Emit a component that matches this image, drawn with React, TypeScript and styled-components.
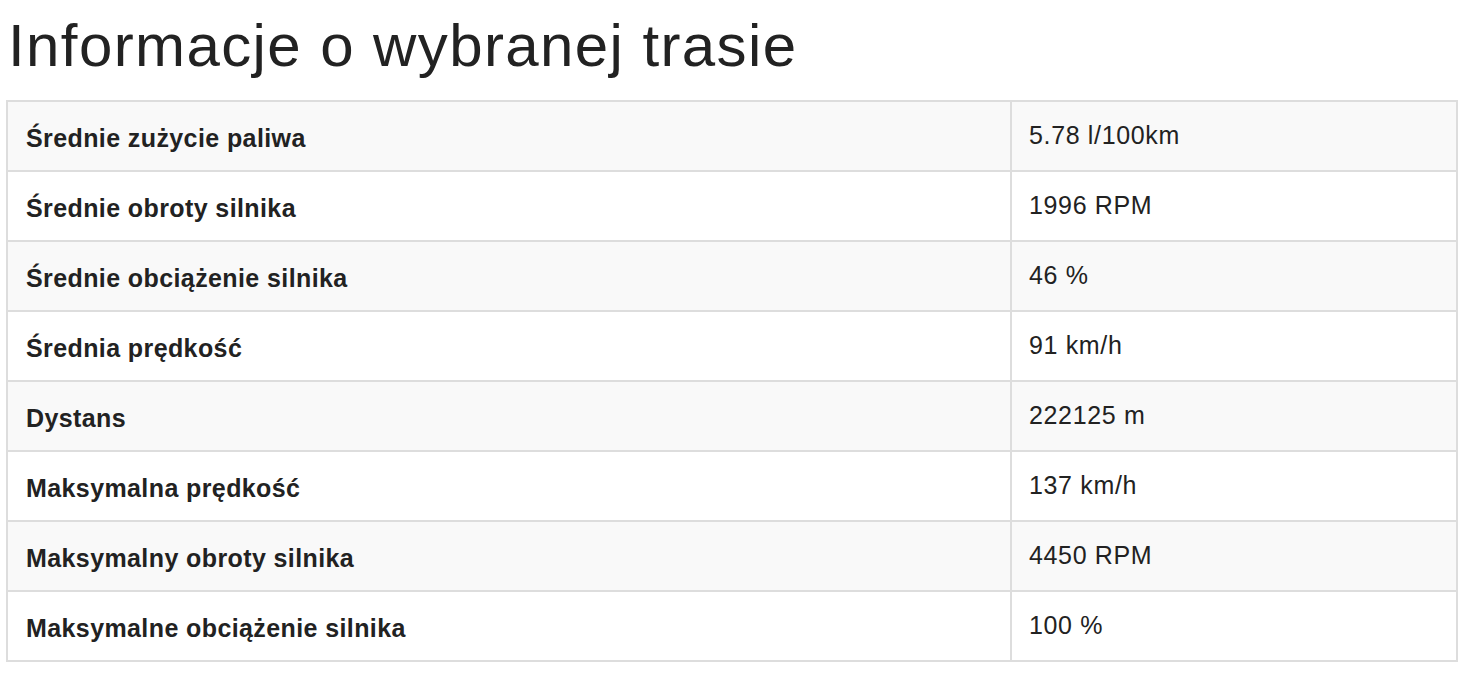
import React from "react";
import styled, { createGlobalStyle } from "styled-components";

const GlobalStyle = createGlobalStyle`
  html, body {
    margin: 0;
    padding: 0;
    background: #ffffff;
  }
  body {
    font-family: "Liberation Sans", Arial, Helvetica, sans-serif;
    color: #222222;
  }
`;

const Page = styled.div`
  padding: 0 6px;
`;

const Heading = styled.h1`
  margin: 0 0 24px 0;
  padding: 16px 0 0 2px;
  font-size: 60px;
  font-weight: 400;
  line-height: 60px;
  color: #222222;
  letter-spacing: 1.4px;
`;

const Table = styled.table`
  width: 1452px;
  border-collapse: collapse;
  border: 2px solid #dddddd;
  table-layout: fixed;
`;

const Row = styled.tr<{ $striped: boolean }>`
  background: ${(p) => (p.$striped ? "#f9f9f9" : "#ffffff")};
`;

const LabelCell = styled.th`
  width: 1004px;
  height: 70px;
  box-sizing: border-box;
  padding: 4px 18px 0 18px;
  border: 2px solid #dddddd;
  text-align: left;
  vertical-align: middle;
  font-size: 25px;
  font-weight: 700;
  letter-spacing: 0.4px;
  color: #222222;
`;

const ValueCell = styled.td`
  height: 70px;
  box-sizing: border-box;
  padding: 0 18px 2px 17px;
  border: 2px solid #dddddd;
  vertical-align: middle;
  font-size: 25px;
  font-weight: 400;
  letter-spacing: 0.65px;
  color: #222222;
`;

const rows: [string, string][] = [
  ["Średnie zużycie paliwa", "5.78 l/100km"],
  ["Średnie obroty silnika", "1996 RPM"],
  ["Średnie obciążenie silnika", "46 %"],
  ["Średnia prędkość", "91 km/h"],
  ["Dystans", "222125 m"],
  ["Maksymalna prędkość", "137 km/h"],
  ["Maksymalny obroty silnika", "4450 RPM"],
  ["Maksymalne obciążenie silnika", "100 %"],
];

export default function App() {
  return (
    <>
      <GlobalStyle />
      <Page>
        <Heading>Informacje o wybranej trasie</Heading>
        <Table>
          <tbody>
            {rows.map(([label, value], i) => (
              <Row key={label} $striped={i % 2 === 0}>
                <LabelCell>{label}</LabelCell>
                <ValueCell>{value}</ValueCell>
              </Row>
            ))}
          </tbody>
        </Table>
      </Page>
    </>
  );
}
